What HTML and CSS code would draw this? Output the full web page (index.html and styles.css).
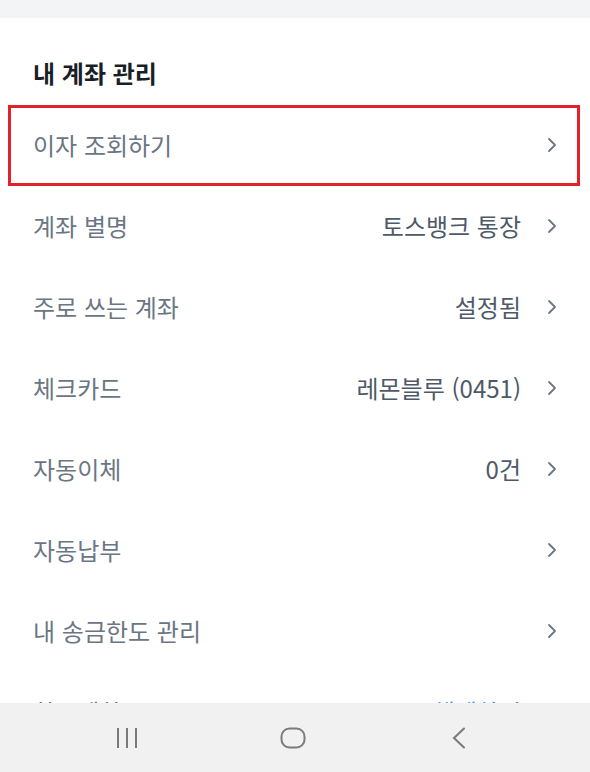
FILE: index.html
```html
<!DOCTYPE html>
<html lang="ko">
<head>
  <meta charset="UTF-8" />
  <meta name="viewport" content="width=device-width, initial-scale=1.0" />
  <title>내 계좌 관리</title>
  <link rel="stylesheet" href="styles.css">
</head>
<body>
  <div class="screen">
    <div class="topband"></div>

    <div class="content">
      <h2 class="title">내 계좌 관리</h2>

      <ul class="menu">
        <li class="row marked">
          <span class="label">이자 조회하기</span>
          <svg class="chev" width="10" height="16" viewBox="0 0 10 16"><path d="M2 2l6 6-6 6" /></svg>
        </li>
        <li class="row">
          <span class="label">계좌 별명</span>
          <span class="value">토스뱅크 통장</span>
          <svg class="chev" width="10" height="16" viewBox="0 0 10 16"><path d="M2 2l6 6-6 6" /></svg>
        </li>
        <li class="row">
          <span class="label">주로 쓰는 계좌</span>
          <span class="value">설정됨</span>
          <svg class="chev" width="10" height="16" viewBox="0 0 10 16"><path d="M2 2l6 6-6 6" /></svg>
        </li>
        <li class="row">
          <span class="label">체크카드</span>
          <span class="value">레몬블루 (0451)</span>
          <svg class="chev" width="10" height="16" viewBox="0 0 10 16"><path d="M2 2l6 6-6 6" /></svg>
        </li>
        <li class="row">
          <span class="label">자동이체</span>
          <span class="value">0건</span>
          <svg class="chev" width="10" height="16" viewBox="0 0 10 16"><path d="M2 2l6 6-6 6" /></svg>
        </li>
        <li class="row">
          <span class="label">자동납부</span>
          <svg class="chev" width="10" height="16" viewBox="0 0 10 16"><path d="M2 2l6 6-6 6" /></svg>
        </li>
        <li class="row">
          <span class="label">내 송금한도 관리</span>
          <svg class="chev" width="10" height="16" viewBox="0 0 10 16"><path d="M2 2l6 6-6 6" /></svg>
        </li>
        <li class="row">
          <span class="label">한도제한</span>
          <span class="value link">해제하기</span>
          <svg class="chev" width="10" height="16" viewBox="0 0 10 16"><path d="M2 2l6 6-6 6" /></svg>
        </li>
      </ul>
    </div>

    <nav class="navbar">
      <svg class="navicon" width="22" height="22" viewBox="0 0 22 22">
        <path d="M2 1v20M11 1v20M20 1v20" stroke="#7a7a7a" stroke-width="2" fill="none"/>
      </svg>
      <svg class="navicon" width="26" height="22" viewBox="0 0 26 22">
        <rect x="1.5" y="1.5" width="23" height="19" rx="8" stroke="#7a7a7a" stroke-width="2" fill="none"/>
      </svg>
      <svg class="navicon" width="16" height="22" viewBox="0 0 16 22">
        <path d="M13 1.5L3 11l10 9.5" stroke="#7a7a7a" stroke-width="2" fill="none" stroke-linecap="round"/>
      </svg>
    </nav>
  </div>
</body>
</html>
```

FILE: styles.css
```css
body {
  margin: 0;
  background: #fff;
  font-family: 'Noto Sans CJK KR', 'Noto Sans', sans-serif;
  color: #333d4b;
}
.screen {
  width: 590px;
  height: 772px;
  position: relative;
  overflow: hidden;
  display: flex;
  flex-direction: column;
}
.topband {
  height: 18px;
  background: #f2f4f6;
  flex-shrink: 0;
}
.content {
  flex: 1;
  overflow: hidden;
}
.title {
  margin: 40px 0 0 33px;
  height: 46px;
  line-height: 30px;
  font-size: 24px;
  font-weight: 700;
  color: #191f28;
}
.menu {
  list-style: none;
  margin: 0;
  padding: 0;
}
.row {
  position: relative;
  height: 81px;
  display: flex;
  align-items: center;
  padding: 0 33px;
  font-size: 24px;
}
.row.marked::after {
  content: "";
  position: absolute;
  top: 1px;
  bottom: -1px;
  left: 8px;
  right: 10px;
  border: 3px solid #e4212b;
}
.label {
  flex: 1;
  color: #6b7684;
}
.value {
  color: #4e5968;
  margin-right: 26px;
}
.value.link {
  color: #3182f6;
}
.chev {
  fill: none;
  stroke: #6b7684;
  stroke-width: 1.8;
  stroke-linecap: round;
  stroke-linejoin: round;
}
.navbar {
  position: absolute;
  left: 0;
  right: 0;
  bottom: 0;
  height: 69px;
  background: #f1f1f1;
  display: grid;
  grid-template-columns: 1fr 1fr 1fr;
  padding: 0 48px 0 44px;
  align-items: center;
  justify-items: center;
}
```
